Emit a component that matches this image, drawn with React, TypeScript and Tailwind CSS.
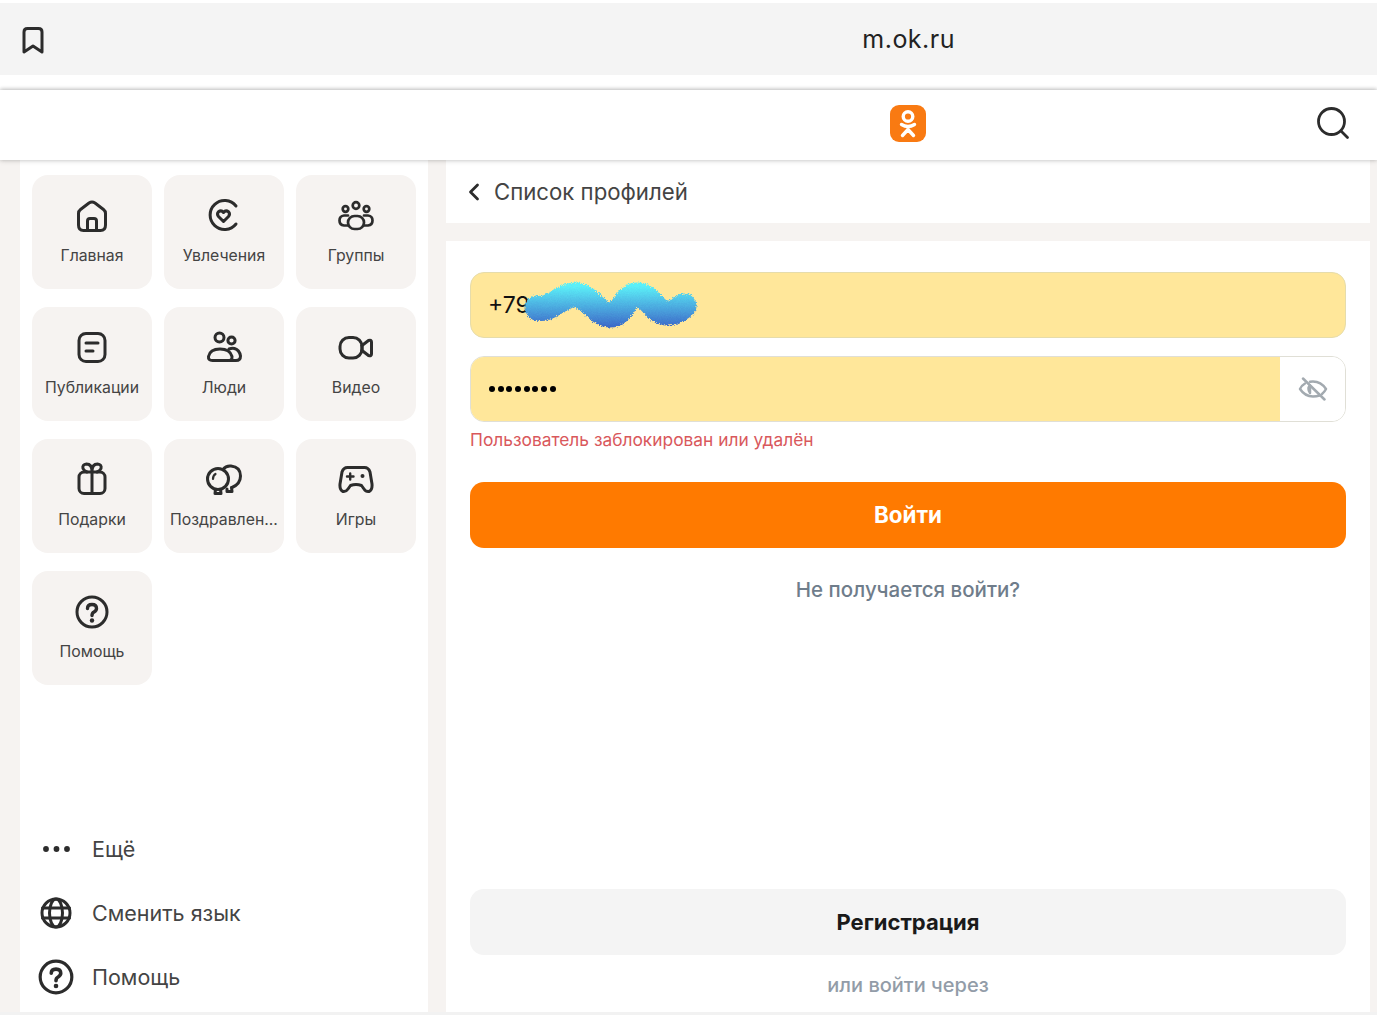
import React from 'react';
import { ChevronLeft } from 'lucide-react';

const iconProps = {
  viewBox: '0 0 36 36',
  fill: 'none',
  stroke: '#2c2c2c',
  strokeWidth: 3,
  strokeLinecap: 'round' as const,
  strokeLinejoin: 'round' as const,
  className: 'w-9 h-9 shrink-0',
};

const HomeIcon = () => (
  <svg {...iconProps}>
    <path d="M4.500 15.500Q4.500 13 6.500 11.500L15 5Q18 3 21 5L29.500 11.500Q31.500 13 31.500 15.500V27Q31.500 32.500 26.500 32.500H9.500Q4.500 32.500 4.500 27Z" />
    <path d="M13.500 32V23Q13.500 20.500 16 20.500H20Q22.500 20.500 22.500 23V32" />
  </svg>
);

const InterestsIcon = () => (
  <svg {...iconProps}>
    <path d="M30 8A14.500 14.500 0 1 0 30 26" />
    <path d="M17.500 23.500L12.500 18.500Q10.500 16 12.500 13.800Q15.300 11.700 17.500 14.500Q19.700 11.700 22.500 13.800Q24.500 16 22.500 18.500Z" />
  </svg>
);

const GroupsIcon = () => (
  <svg {...iconProps} strokeWidth={2.7}>
    <circle cx="18" cy="7.500" r="3.300" />
    <circle cx="7.500" cy="11" r="2.800" />
    <circle cx="28.500" cy="11" r="2.800" />
    <rect x="10" y="18" width="16" height="13" rx="6.500" />
    <path d="M10 17.500H6Q1.500 18 1.500 22.500Q1.500 27 6 27.500H10" />
    <path d="M26 17.500H30Q34.500 18 34.500 22.500Q34.500 27 30 27.500H26" />
  </svg>
);

const PostsIcon = () => (
  <svg {...iconProps}>
    <rect x="5" y="3.500" width="26" height="28" rx="7" />
    <path d="M12 13H24M12 21H19" />
  </svg>
);

const PeopleIcon = () => (
  <svg {...iconProps}>
    <circle cx="13.500" cy="7.500" r="4.500" />
    <circle cx="25.500" cy="10.500" r="3.600" />
    <path d="M6.500 30.500Q2 30.500 2.500 26.500Q4 19 14 19Q24 19 26 26.500Q26.500 30.500 22 30.500Z" />
    <path d="M23 19Q26 18 28.500 18.500Q33.500 20 34.500 26Q34.500 30.500 30 30.500H23" />
  </svg>
);

const VideoIcon = () => (
  <svg {...iconProps}>
    <rect x="2" y="7.500" width="22" height="20.500" rx="9" />
    <path d="M24 15.500L30.500 10.500Q33.500 9.500 33.500 12V24Q33.500 26.500 30.500 25.500L24 20.500" />
    <path d="M24 15V21" />
  </svg>
);

const GiftIcon = () => (
  <svg {...iconProps}>
    <rect x="5" y="10" width="26" height="21.500" rx="5" />
    <path d="M18 10V31.500M18 9.500Q18 2 12.500 2Q8 2.500 9 6.500Q10 9 13 10M18 9.500Q18 2 23.500 2Q28 2.500 27 6.500Q26 9 23 10" />
  </svg>
);

const BalloonsIcon = () => (
  <svg {...iconProps}>
    <circle cx="12" cy="17" r="10.500" />
    <path d="M17 7.500Q20 3.500 25 4Q34.500 5 34.500 14Q34.500 22 26 25.500" />
    <path d="M7 17Q7 13.500 9.500 12" strokeWidth={2.200} />
    <path d="M9.500 27.500L9 31.500H15L14.500 27.500M21 27L21 29.500H26L25.500 25.500" />
  </svg>
);

const GameIcon = () => (
  <svg {...iconProps}>
    <path d="M9.500 5.500H26.500Q30.500 5.500 32 10L34 22Q34.500 28 31 29.500Q28 30 26 27L23.500 23.500Q18 21.500 12.500 23.500L10 27Q8 30 5 29.500Q1.500 28 2 22L4 10Q5.500 5.500 9.500 5.500Z" />
    <path d="M9 14.500H15.500M12.200 11.500V17.500" strokeWidth={2.400} />
    <circle cx="24.500" cy="14" r="2" fill="#2c2c2c" stroke="none" />
  </svg>
);

const HelpIcon = ({ large }: { large?: boolean }) => (
  <svg {...iconProps} className={large ? 'w-[38px] h-[38px] shrink-0' : 'w-9 h-9 shrink-0'}>
    <circle cx="18" cy="18" r="15" />
    <path d="M13.500 14.500Q13.500 10.500 18 10.500Q22.500 10.500 22.500 14.500Q22.500 16.500 20 18Q18 19 18 21.500" strokeWidth={3.400} />
    <circle cx="18" cy="26.500" r="2.200" fill="#2c2c2c" stroke="none" />
  </svg>
);

const DotsIcon = () => (
  <svg {...iconProps} stroke="none" fill="#2c2c2c">
    <circle cx="8" cy="18" r="2.900" />
    <circle cx="18.500" cy="18" r="2.900" />
    <circle cx="29" cy="18" r="2.900" />
  </svg>
);

const GlobeIcon = () => (
  <svg {...iconProps}>
    <circle cx="18" cy="18" r="14" />
    <ellipse cx="18" cy="18" rx="6.500" ry="14" />
    <path d="M4.500 13H31.500M4.500 23H31.500" />
  </svg>
);

const tiles = [
  { label: 'Главная', icon: <HomeIcon /> },
  { label: 'Увлечения', icon: <InterestsIcon /> },
  { label: 'Группы', icon: <GroupsIcon /> },
  { label: 'Публикации', icon: <PostsIcon /> },
  { label: 'Люди', icon: <PeopleIcon /> },
  { label: 'Видео', icon: <VideoIcon /> },
  { label: 'Подарки', icon: <GiftIcon /> },
  { label: 'Поздравлен...', icon: <BalloonsIcon /> },
  { label: 'Игры', icon: <GameIcon /> },
  { label: 'Помощь', icon: <HelpIcon /> },
];

const links = [
  { label: 'Ещё', icon: <DotsIcon /> },
  { label: 'Сменить язык', icon: <GlobeIcon /> },
  { label: 'Помощь', icon: <HelpIcon large /> },
];

function Squiggle() {
  return (
    <svg viewBox="0 0 174 50" className="absolute left-[53px] top-[7px] w-[174px] h-[50px]">
      <defs>
        <linearGradient id="sq" gradientUnits="userSpaceOnUse" x1="0" y1="6" x2="0" y2="46">
          <stop offset="0" stopColor="#5cf0f8" />
          <stop offset="1" stopColor="#3d6cc9" />
        </linearGradient>
        <filter id="fuzz" filterUnits="userSpaceOnUse" x="0" y="0" width="174" height="50">
          <feTurbulence type="fractalNoise" baseFrequency="0.9" numOctaves="2" result="noise" />
          <feDisplacementMap in="SourceGraphic" in2="noise" scale="5" xChannelSelector="R" yChannelSelector="G" />
        </filter>
      </defs>
      <path
        d="M13 28C26 32 36 15 51 15C66 15 72 35 86 35C100 35 100 15 113 15C127 15 130 33 143 33C150 33 155 30 160 26"
        fill="none"
        stroke="url(#sq)"
        strokeWidth="25"
        strokeLinecap="round"
        filter="url(#fuzz)"
      />
    </svg>
  );
}

export default function App() {
  return (
    <div className="w-[1377px] h-[1015px] overflow-hidden flex flex-col bg-[#f6f3f1] font-['Inter',sans-serif]">
      {/* Browser bar */}
      <div className="shrink-0 bg-white pt-[3px] pb-[15px]">
        <div className="h-[72px] bg-[#f4f4f4] flex items-center pl-[21px]">
          <svg viewBox="0 0 24 28" className="w-6 h-7 mt-[1px]" fill="none" stroke="#2c2c2c" strokeWidth="3" strokeLinejoin="round">
            <path d="M3 26V6Q3 2.500 6.500 2.500H17.500Q21 2.500 21 6V26L12 20Z" />
          </svg>
          <div className="w-[910px] mt-[1px] text-right text-[25px] tracking-[0.5px] text-[#222]">m.ok.ru</div>
        </div>
      </div>

      {/* Site header */}
      <div className="shrink-0 h-[70px] relative z-10 bg-white flex items-center pl-[890px] pr-[26px] shadow-[0_-1px_4px_rgba(0,0,0,0.22),0_1px_5px_rgba(0,0,0,0.14)]">
        <div className="w-9 h-[37px] mb-[3px] rounded-[9px] bg-[#f97a12] flex items-center justify-center">
          <svg viewBox="0 0 36 37" className="w-9 h-[37px]" fill="none" stroke="#fff" strokeWidth="3.400" strokeLinecap="round">
            <circle cx="18" cy="11.500" r="4.800" />
            <path d="M11.500 19.500Q18 23.500 24.500 19.500M18 22V25M18 24.500L12.500 30.500M18 24.500L23.500 30.500" />
          </svg>
        </div>
        <svg viewBox="0 0 36 36" className="ml-auto w-9 h-9 mb-[5px]" fill="none" stroke="#2c2c2c" strokeWidth="2.800" strokeLinecap="round">
          <circle cx="16.500" cy="16.500" r="13" />
          <path d="M26 26L32.500 32.500" />
        </svg>
      </div>

      <div className="flex-1 min-h-0 flex pl-5 pr-[7px]">
        {/* Sidebar */}
        <aside className="w-[408px] shrink-0 bg-white flex flex-col pt-[15px] px-3">
          <div className="grid grid-cols-3 gap-x-3 gap-y-[18px]">
            {tiles.map((t) => (
              <div key={t.label} className="h-[114px] rounded-2xl bg-[#f6f3f1] flex flex-col items-center pt-[23px]">
                {t.icon}
                <div className="mt-[12px] text-[15.800px] leading-5 text-[#444] whitespace-nowrap">{t.label}</div>
              </div>
            ))}
          </div>
          <div className="mt-auto pb-[3px] flex flex-col">
            {links.map((l) => (
              <div key={l.label} className="h-16 flex items-center">
                <div className="w-12 flex justify-center mr-[12px]">{l.icon}</div>
                <span className="text-[21.500px] text-[#444]">{l.label}</span>
              </div>
            ))}
          </div>
        </aside>

        {/* Main column */}
        <main className="ml-[18px] flex-1 flex flex-col min-w-0">
          <div className="h-[63px] shrink-0 bg-white flex items-center pl-[14px]">
            <ChevronLeft className="w-7 h-7 text-[#2c2c2c]" strokeWidth={2.4} />
            <span className="ml-[6px] text-[22.200px] text-[#444]">Список профилей</span>
          </div>
          <div className="mt-[18px] flex-1 min-h-0 bg-white px-6 pt-[31px] flex flex-col pb-[14px]">
            <div className="relative h-[66px] rounded-[14px] bg-[#ffe79a] border border-[#e6dcab] flex items-center pl-[17px] text-[23px] text-[#111]">
              +79
              <Squiggle />
            </div>
            <div className="mt-[18px] h-[66px] rounded-[14px] border border-[#e0dfd6] overflow-hidden flex">
              <div className="flex-1 bg-[#ffe79a] flex items-center pl-[18px] gap-[2.700px]">
                {[0, 1, 2, 3, 4, 5, 6, 7].map((i) => (
                  <span key={i} className="w-[6px] h-[6px] rounded-full bg-black" />
                ))}
              </div>
              <div className="w-[65px] bg-white flex items-center justify-center">
                <svg viewBox="0 0 30 24" className="w-[30px] h-6" fill="none" stroke="#a3aab0" strokeWidth="2.500" strokeLinecap="round" strokeLinejoin="round">
                  <path d="M7 6.500Q3.500 8.500 2 12Q7 19.500 15 19.500Q18.500 19.500 21.500 18.500M12 4.800Q13.500 4.500 15 4.500Q23 4.500 28 12Q26.500 15 24 17" />
                  <path d="M10.500 12Q10.500 10 12 8.500V16Q10.500 14 10.500 12Z" fill="#a3aab0" />
                  <path d="M5 1.500L26.500 22.500" />
                </svg>
              </div>
            </div>
            <div className="mt-[8px] text-[17.350px] leading-[20px] text-[#d9585c]">Пользователь заблокирован или удалён</div>
            <div className="mt-[32px] h-[66px] rounded-[14px] bg-[#ff7a00] flex items-center justify-center text-white text-[22.400px] font-bold">Войти</div>
            <div className="mt-[29px] text-center text-[20.500px] leading-[26px] font-medium text-[#6f7d8b]">Не получается войти?</div>
            <div className="mt-auto h-[66px] rounded-[14px] bg-[#f4f4f4] flex items-center justify-center text-[22px] font-bold text-[#1a1a1a]">Регистрация</div>
            <div className="mt-[17px] text-center text-[20px] leading-[26px] font-medium text-[#929ca8]">или войти через</div>
          </div>
        </main>
      </div>
      <div className="shrink-0 h-[3px] bg-[#f2f2f2]" />
    </div>
  );
}
